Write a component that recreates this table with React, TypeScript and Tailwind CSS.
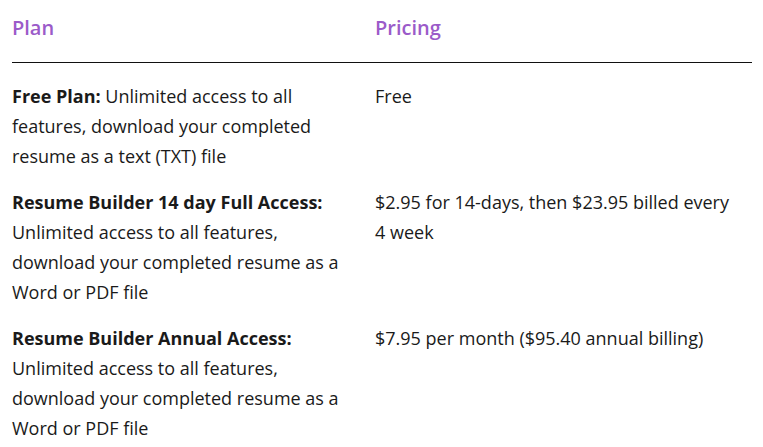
const rows = [
  {
    name: 'Free Plan:',
    lines: [' Unlimited access to all', 'features, download your completed', 'resume as a text (TXT) file'],
    price: ['Free'],
  },
  {
    name: 'Resume Builder 14 day Full Access:',
    lines: ['', 'Unlimited access to all features,', 'download your completed resume as a', 'Word or PDF file'],
    price: ['$2.95 for 14-days, then $23.95 billed every', '4 week'],
  },
  {
    name: 'Resume Builder Annual Access:',
    lines: ['', 'Unlimited access to all features,', 'download your completed resume as a', 'Word or PDF file'],
    price: ['$7.95 per month ($95.40 annual billing)'],
  },
];

export default function App() {
  return (
    <div className="min-h-screen bg-white pl-[12px] pr-[12px] pt-[11px] font-['Open_Sans',sans-serif] text-[#1a1a1a]">
      <table className="w-[740px] border-collapse text-left">
        <thead>
          <tr className="border-b-[1.5px] border-[#111]">
            <th className="w-[363px] pb-[18px] text-[20px] font-semibold leading-[33px] text-[#9b5bc9]">Plan</th>
            <th className="pb-[18px] text-[20px] font-semibold leading-[33px] text-[#9b5bc9]">Pricing</th>
          </tr>
        </thead>
        <tbody className="text-[18px] leading-[30px]">
          {rows.map((r, i) => (
            <tr key={i} className="align-top">
              <td className={i === 0 ? 'pt-[18px] pb-4' : 'pb-4'}>
                <span className="font-bold">{r.name}</span>
                {r.lines.map((l, j) => (
                  <span key={j}>
                    {j > 0 && <br />}
                    {l}
                  </span>
                ))}
              </td>
              <td className={i === 0 ? 'pt-[18px] pb-4' : 'pb-4'}>
                {r.price.map((p, j) => (
                  <span key={j}>
                    {j > 0 && <br />}
                    {p}
                  </span>
                ))}
              </td>
            </tr>
          ))}
        </tbody>
      </table>
    </div>
  );
}
